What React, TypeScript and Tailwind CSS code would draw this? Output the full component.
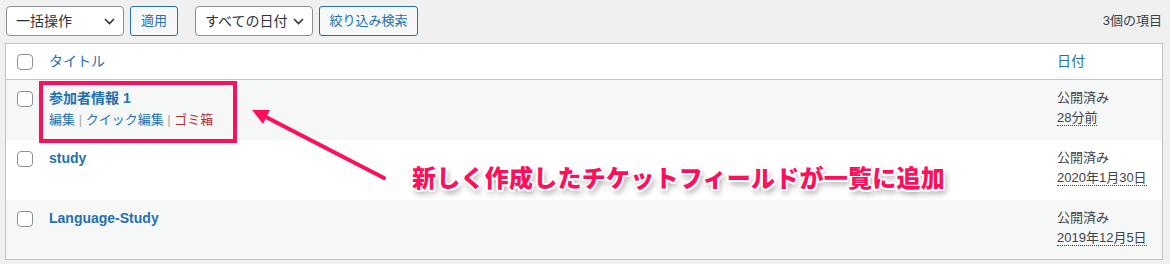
import React from "react";

const Chevron = () => (
  <svg width="11" height="7" viewBox="0 0 11 7" className="shrink-0">
    <polyline points="1,1 5.5,5.5 10,1" fill="none" stroke="#2c3338" strokeWidth="1.6" />
  </svg>
);

const Checkbox = ({ className = "" }: { className?: string }) => (
  <div className={`w-[16px] h-[16px] border border-[#8c8f94] rounded-[4px] bg-white shrink-0 ${className}`} />
);

const DateCell = ({ date }: { date: string }) => (
  <div className="w-[105px] shrink-0 pt-[8px] text-[13px] leading-[19.5px] text-[#3c434a]">
    <div>公開済み</div>
    <div>
      <span className="border-b border-dotted border-[#3c434a]">{date}</span>
    </div>
  </div>
);

export default function App() {
  return (
    <div
      className="relative w-[1170px] h-[264px] overflow-hidden bg-[#f0f0f1]"
      style={{ fontFamily: '"Liberation Sans", "Noto Sans CJK JP", sans-serif' }}
    >
      {/* Toolbar */}
      <div className="flex items-center pt-[6px] pl-[6px] pr-[8px]">
        <div className="w-[118px] h-[30px] bg-white border border-[#8c8f94] rounded-[4px] flex items-center justify-between pl-[9px] pr-[8px] text-[14px] text-[#2c3338]">
          <span>一括操作</span>
          <Chevron />
        </div>
        <div className="ml-[6px] w-[48px] h-[30px] bg-[#f6f7f7] border border-[#2271b1] rounded-[3px] flex items-center justify-center text-[13px] text-[#2271b1]">
          適用
        </div>
        <div className="ml-[17px] w-[118px] h-[30px] bg-white border border-[#8c8f94] rounded-[4px] flex items-center justify-between pl-[9px] pr-[8px] text-[14px] text-[#2c3338]">
          <span>すべての日付</span>
          <Chevron />
        </div>
        <div className="ml-[6px] w-[99px] h-[30px] bg-[#f6f7f7] border border-[#2271b1] rounded-[3px] flex items-center justify-center text-[13px] text-[#2271b1]">
          絞り込み検索
        </div>
        <div className="ml-auto text-[13px] text-[#3c434a]">3個の項目</div>
      </div>

      {/* Table */}
      <div className="mt-[7px] ml-[5px] w-[1158px] bg-white border border-[#c3c4c7]">
        <div className="h-[36px] flex items-center border-b border-[#c3c4c7]">
          <div className="pl-[11px] w-[43px] shrink-0">
            <Checkbox />
          </div>
          <div className="flex-1 text-[14px] text-[#2271b1]">タイトル</div>
          <div className="w-[105px] shrink-0 text-[14px] text-[#2271b1]">日付</div>
        </div>

        <div className="h-[60px] flex items-start bg-[#f6f7f7]">
          <div className="pl-[11px] w-[43px] shrink-0 pt-[11px]">
            <Checkbox />
          </div>
          <div className="flex-1 pt-[8px]">
            <div className="text-[14px] leading-[20px] font-bold text-[#2271b1]">参加者情報 1</div>
            <div className="mt-[2px] text-[13px] leading-[19.5px] whitespace-pre">
              <span className="text-[#2271b1]">編集</span>
              <span className="text-[#a7aaad]"> | </span>
              <span className="text-[#2271b1]">クイック編集</span>
              <span className="text-[#a7aaad]"> | </span>
              <span className="text-[#b32d2e]">ゴミ箱</span>
            </div>
          </div>
          <DateCell date="28分前" />
        </div>

        <div className="h-[60px] flex items-start bg-white">
          <div className="pl-[11px] w-[43px] shrink-0 pt-[11px]">
            <Checkbox />
          </div>
          <div className="flex-1 pt-[8px] text-[14px] leading-[20px] font-bold text-[#2271b1]">study</div>
          <DateCell date="2020年1月30日" />
        </div>

        <div className="h-[59px] flex items-start bg-[#f6f7f7]">
          <div className="pl-[11px] w-[43px] shrink-0 pt-[11px]">
            <Checkbox />
          </div>
          <div className="flex-1 pt-[8px] text-[14px] leading-[20px] font-bold text-[#2271b1]">Language-Study</div>
          <DateCell date="2019年12月5日" />
        </div>
      </div>

      {/* Annotation overlays */}
      <div className="absolute left-[39px] top-[81px] w-[198px] h-[62px] border-[4px] border-[#ff0f5a]" />
      <svg className="absolute left-0 top-0" width="1170" height="264" viewBox="0 0 1170 264">
        <line x1="384" y1="178" x2="262" y2="115" stroke="#ff0f5a" strokeWidth="4" strokeLinecap="round" />
        <polygon points="252,110 263,124 270,110" fill="#ff0f5a" />
      </svg>
      <div
        className="absolute left-[412px] top-[161px] text-[24px] leading-[32px] tracking-[0.25px] font-black text-[#ff0f5a] whitespace-nowrap [text-shadow:0_0_2px_#fff,1.5px_1.5px_0_#fff,-1.5px_-1.5px_0_#fff,1.5px_-1.5px_0_#fff,-1.5px_1.5px_0_#fff,0_2px_0_#fff,0_-2px_0_#fff,2px_0_0_#fff,-2px_0_0_#fff,2px_4px_6px_rgba(0,0,0,0.45)]"
        style={{ fontFamily: '"Noto Sans CJK JP", sans-serif' }}
      >
        新しく作成したチケットフィールドが一覧に追加
      </div>
    </div>
  );
}
